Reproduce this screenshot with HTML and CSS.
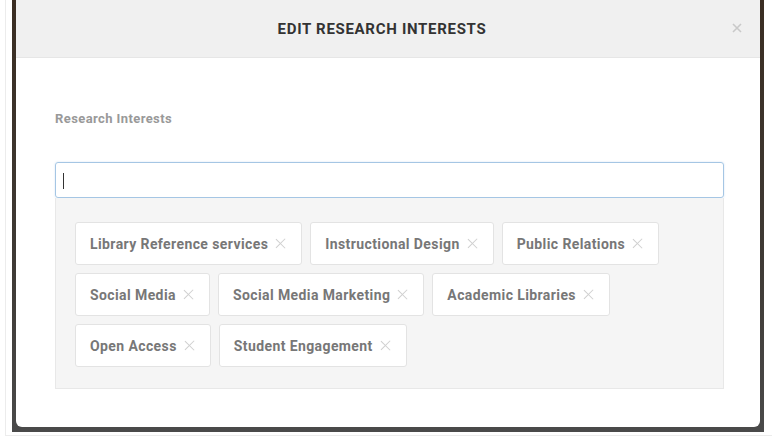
FILE: index.html
```html
<!DOCTYPE html>
<html lang="en">
<head>
    <meta charset="UTF-8">
    <meta name="viewport" content="width=device-width, initial-scale=1.0">
    <title>Edit Research Interests</title>
    <link rel="stylesheet" href="styles.css">
</head>
<body>

<div class="page">
    <div class="backdrop">
        <div class="modal">
            <div class="modal-header">
                <h3>EDIT RESEARCH INTERESTS</h3>
                <span class="close-btn">
                    <svg width="10" height="10" viewBox="0 0 10 10"><path d="M1 1L9 9M9 1L1 9" stroke="#c9c9c9" stroke-width="1.6"/></svg>
                </span>
            </div>
            <div class="modal-body">
                <label class="field-label">Research Interests</label>
                <div class="tag-input"><span class="caret"></span></div>
                <div class="tag-list">
                    <span class="tag">Library Reference services <i class="tag-x"></i></span>
                    <span class="tag">Instructional Design <i class="tag-x"></i></span>
                    <span class="tag">Public Relations <i class="tag-x"></i></span>
                    <span class="tag">Social Media <i class="tag-x"></i></span>
                    <span class="tag">Social Media Marketing <i class="tag-x"></i></span>
                    <span class="tag">Academic Libraries <i class="tag-x"></i></span>
                    <span class="tag">Open Access <i class="tag-x"></i></span>
                    <span class="tag">Student Engagement <i class="tag-x"></i></span>
                </div>
            </div>
        </div>
    </div>
</div>

</body>
</html>
```

FILE: styles.css
```css
body {
    margin: 0;
    background: #fff;
    font-family: Roboto, "Liberation Sans", Arial, sans-serif;
}
.page {
    width: 767px;
    height: 436px;
    box-sizing: border-box;
    margin-left: 5px;
    padding-left: 6px;
    border-left: 1px solid #ececec;
    border-bottom: 1px solid #ececec;
}
.backdrop {
    background: linear-gradient(#3a2d22, #3f3a35 60%, #4a4a4a);
    padding: 0 4px 5px 4px;
    width: 752px;
    box-sizing: border-box;
}
.modal {
    background: white;
    border-radius: 0 0 6px 6px;
    overflow: hidden;
}
.modal-header {
    height: 57px;
    background: #f0f0f0;
    border-bottom: 1px solid #e6e6e6;
    display: flex;
    align-items: center;
    justify-content: center;
    position: relative;
}
.modal-header h3 {
    margin: 0 0 0 -12px;
    font-size: 15px;
    font-weight: bold;
    letter-spacing: 0.7px;
    color: #333;
}
.close-btn {
    position: absolute;
    right: 18px;
    top: 23px;
    line-height: 0;
}
.modal-body {
    padding: 53px 36px 38px 39px;
}
.field-label {
    display: block;
    font-size: 13px;
    font-weight: bold;
    letter-spacing: 0.4px;
    color: #999;
    line-height: 16px;
    margin-bottom: 35px;
}
.tag-input {
    height: 36px;
    box-sizing: border-box;
    border: 1px solid #a5c6e4;
    border-radius: 3px;
    box-shadow: 0 0 2px rgba(120, 170, 220, 0.35);
    padding: 10px 7px;
}
.caret {
    display: block;
    width: 1px;
    height: 16px;
    background: #333;
}
.tag-list {
    background: #f5f5f5;
    border: 1px solid #e8e8e8;
    border-top: none;
    padding: 24px 20px 21px 19px;
    display: flex;
    flex-wrap: wrap;
    gap: 8px 8px;
}
.tag {
    display: inline-flex;
    align-items: center;
    height: 43px;
    box-sizing: border-box;
    padding: 0 15px 0 14px;
    background: white;
    border: 1px solid #e3e3e3;
    border-radius: 3px;
    font-size: 14px;
    font-weight: bold;
    letter-spacing: 0.4px;
    color: #777;
}
.tag-x {
    display: inline-block;
    width: 11px;
    height: 11px;
    margin-left: 7px;
    position: relative;
}
.tag-x::before,
.tag-x::after {
    content: "";
    position: absolute;
    left: 5px;
    top: -1px;
    width: 1.4px;
    height: 13px;
    background: #cfcfcf;
    transform: rotate(45deg);
}
.tag-x::after {
    transform: rotate(-45deg);
}
```
